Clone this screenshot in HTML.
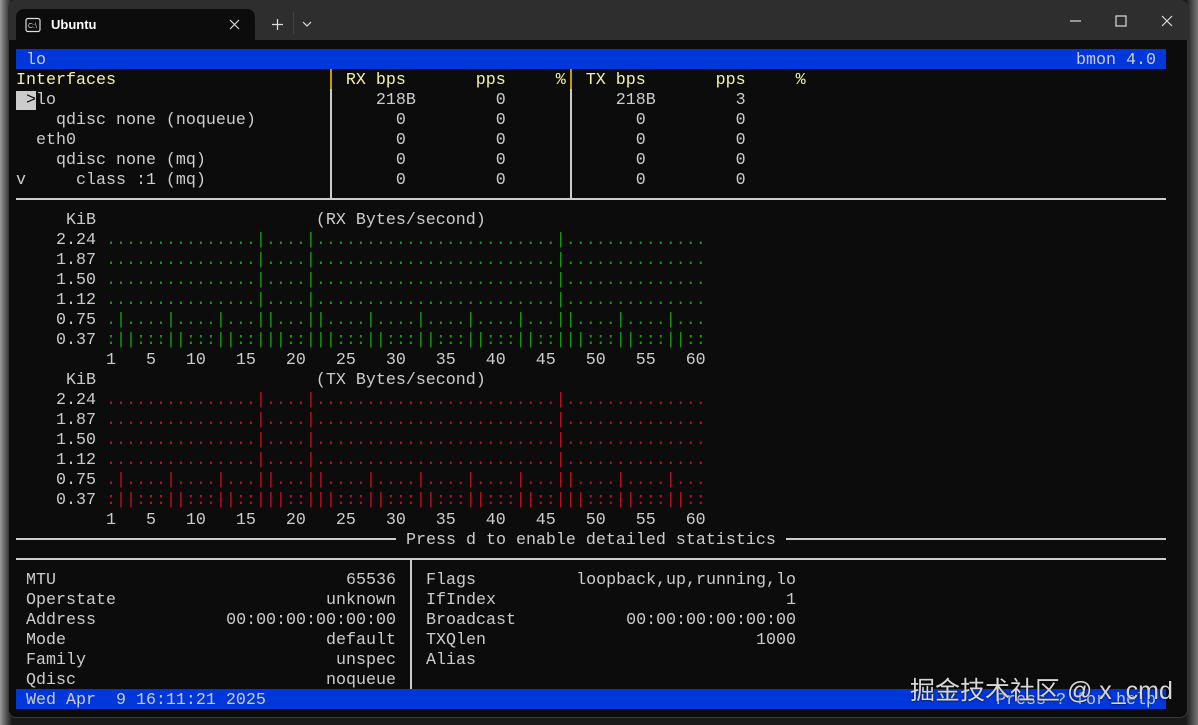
<!DOCTYPE html>
<html><head><meta charset="utf-8"><style>
*{margin:0;padding:0;box-sizing:border-box}
html,body{width:1198px;height:725px;overflow:hidden}
body{background:linear-gradient(90deg,#9a9a9a 0,#555 6px,#1a1a1a 12px,#1a1a1a 1186px,#777 1198px);position:relative;font-family:"Liberation Mono",monospace}
.win{position:absolute;left:8px;top:0;width:1180px;height:718px;background:#0c0c0c;border-radius:8px;overflow:hidden;border:1px solid #3a3a3a}
.t{position:absolute;font-family:"Liberation Sans",sans-serif;color:#fff}
.r{position:absolute;left:16px;height:20px;line-height:20px;font-size:16.67px;white-space:pre;color:#cccccc;margin-top:2px}
.a{position:absolute;height:20px;line-height:20px;font-size:16.67px;white-space:pre;color:#cccccc;margin-top:2px}
.y{color:#f9f1a5}.g{color:#13a10e}.d{color:#c50f1f}
.blue{position:absolute;left:16px;width:1150px;height:20px;background:#0037da}
.hl{position:absolute;height:2px;background:#cccccc}
.vl{position:absolute;width:2px;background:#cccccc}
</style></head><body>
<div class="win" style="left:8px"></div>
<div style="position:absolute;left:8px;top:0;width:1180px;height:40px;background:#2e2e2e;border-radius:8px 8px 0 0"></div>
<div style="position:absolute;left:16px;top:9px;width:239px;height:31px;background:#0c0c0c;border-radius:8px 8px 0 0"></div>
<svg style="position:absolute;left:25px;top:17px" width="16" height="16" viewBox="0 0 16 16"><rect x="1" y="1.5" width="14" height="13" rx="2" fill="none" stroke="#ddd" stroke-width="1.2"/><text x="3" y="11" font-size="7" fill="#ddd" font-family="Liberation Sans">C:\</text></svg>
<div class="t" style="left:51px;top:17px;font-size:13px;font-weight:bold">Ubuntu</div>
<svg style="position:absolute;left:229px;top:19px" width="11" height="11"><path d="M1 1L10 10M10 1L1 10" stroke="#ddd" stroke-width="1.2"/></svg>
<svg style="position:absolute;left:271px;top:18px" width="13" height="13"><path d="M6.5 1V12M1 6.5H12" stroke="#ddd" stroke-width="1.2"/></svg>
<div style="position:absolute;left:293px;top:12px;width:1px;height:22px;background:#444"></div>
<svg style="position:absolute;left:302px;top:21px" width="10" height="7"><path d="M1 1L5 5L9 1" stroke="#ddd" fill="none" stroke-width="1.2"/></svg>
<svg style="position:absolute;left:1070px;top:20px" width="12" height="2"><path d="M0 1H11" stroke="#ddd" stroke-width="1.2"/></svg>
<svg style="position:absolute;left:1115px;top:15px" width="12" height="12"><rect x="1" y="1" width="10" height="10" fill="none" stroke="#ddd" stroke-width="1.2"/></svg>
<svg style="position:absolute;left:1161px;top:15px" width="12" height="12"><path d="M1 1L11 11M11 1L1 11" stroke="#ddd" stroke-width="1.2"/></svg>

<div class="blue" style="top:49px"></div>
<div class="r" style="top:49px"> lo</div>
<div class="a" style="top:49px;left:1076px">bmon 4.0</div>

<div class="r y" style="top:69px">Interfaces                       RX bps       pps     %  TX bps       pps     %</div>
<div style="position:absolute;left:330px;top:69px;width:2px;height:20px;background:#c19c00"></div>
<div style="position:absolute;left:570px;top:69px;width:2px;height:20px;background:#c19c00"></div>
<div class="vl" style="left:330px;top:89px;height:109px"></div>
<div class="vl" style="left:570px;top:89px;height:109px"></div>
<div style="position:absolute;left:16px;top:91px;width:20px;height:19px;background:#cccccc"></div>
<div class="r" style="top:89px"> <span style="color:#0c0c0c">&gt;</span>lo                                218B        0           218B        3</div>
<div class="r" style="top:109px">    qdisc none (noqueue)              0         0             0         0</div>
<div class="r" style="top:129px">  eth0                                0         0             0         0</div>
<div class="r" style="top:149px">    qdisc none (mq)                   0         0             0         0</div>
<div class="r" style="top:169px">v     class :1 (mq)                   0         0             0         0</div>
<div class="hl" style="left:16px;width:1150px;top:198px"></div>

<div class="r" style="top:209px">     KiB                      (RX Bytes/second)</div>
<div class="r" style="top:229px">    2.24 <span class="g">...............|....|........................|..............</span></div>
<div class="r" style="top:249px">    1.87 <span class="g">...............|....|........................|..............</span></div>
<div class="r" style="top:269px">    1.50 <span class="g">...............|....|........................|..............</span></div>
<div class="r" style="top:289px">    1.12 <span class="g">...............|....|........................|..............</span></div>
<div class="r" style="top:309px">    0.75 <span class="g">.|....|....|...||...||....|....|....|....|...||....|....|...</span></div>
<div class="r" style="top:329px">    0.37 <span class="g">:||:::||:::||::|||::|||:::||:::||:::||:::||::|||:::||:::||::</span></div>
<div class="r" style="top:349px">         1   5   10   15   20   25   30   35   40   45   50   55   60</div>
<div class="r" style="top:369px">     KiB                      (TX Bytes/second)</div>
<div class="r" style="top:389px">    2.24 <span class="d">...............|....|........................|..............</span></div>
<div class="r" style="top:409px">    1.87 <span class="d">...............|....|........................|..............</span></div>
<div class="r" style="top:429px">    1.50 <span class="d">...............|....|........................|..............</span></div>
<div class="r" style="top:449px">    1.12 <span class="d">...............|....|........................|..............</span></div>
<div class="r" style="top:469px">    0.75 <span class="d">.|....|....|...||...||....|....|....|....|...||....|....|...</span></div>
<div class="r" style="top:489px">    0.37 <span class="d">:||:::||:::||::|||::|||:::||:::||:::||:::||::|||:::||:::||::</span></div>
<div class="r" style="top:509px">         1   5   10   15   20   25   30   35   40   45   50   55   60</div>

<div class="hl" style="left:16px;width:380px;top:538px"></div>
<div class="r" style="top:529px;left:406px">Press d to enable detailed statistics</div>
<div class="hl" style="left:786px;width:380px;top:538px"></div>
<div class="hl" style="left:16px;width:1150px;top:558px"></div>
<div class="vl" style="left:410px;top:560px;height:129px"></div>

<div class="a" style="left:26px;top:569px">MTU</div><div class="a" style="right:802px;top:569px">65536</div>
<div class="a" style="left:26px;top:589px">Operstate</div><div class="a" style="right:802px;top:589px">unknown</div>
<div class="a" style="left:26px;top:609px">Address</div><div class="a" style="right:802px;top:609px">00:00:00:00:00:00</div>
<div class="a" style="left:26px;top:629px">Mode</div><div class="a" style="right:802px;top:629px">default</div>
<div class="a" style="left:26px;top:649px">Family</div><div class="a" style="right:802px;top:649px">unspec</div>
<div class="a" style="left:26px;top:669px">Qdisc</div><div class="a" style="right:802px;top:669px">noqueue</div>
<div class="a" style="left:426px;top:569px">Flags</div><div class="a" style="right:402px;top:569px">loopback,up,running,lo</div>
<div class="a" style="left:426px;top:589px">IfIndex</div><div class="a" style="right:402px;top:589px">1</div>
<div class="a" style="left:426px;top:609px">Broadcast</div><div class="a" style="right:402px;top:609px">00:00:00:00:00:00</div>
<div class="a" style="left:426px;top:629px">TXQlen</div><div class="a" style="right:402px;top:629px">1000</div>
<div class="a" style="left:426px;top:649px">Alias</div>

<div class="blue" style="top:689px"></div>
<div class="r" style="top:689px"> Wed Apr  9 16:11:21 2025</div>
<div class="a" style="top:689px;right:42px">Press ? for help</div>
<div style="position:absolute;left:910px;top:671px;font-family:'Liberation Sans','Noto Sans CJK SC',sans-serif;font-size:25px;color:#d8d8d8;white-space:pre;text-shadow:0 0 2px #000">掘金技术社区 @ x_cmd</div>
</body></html>
